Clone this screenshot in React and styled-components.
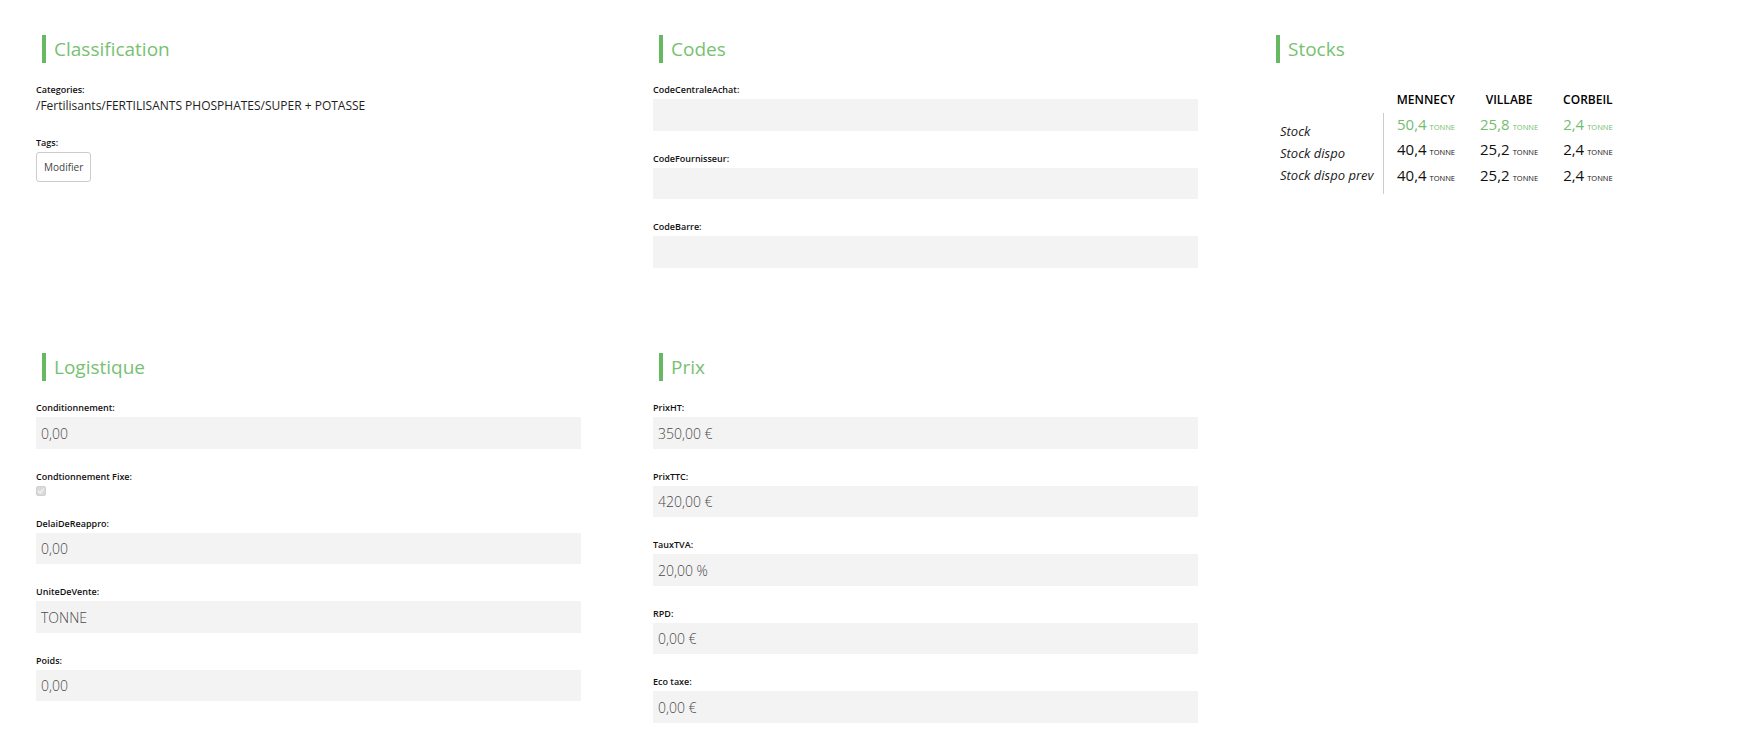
import React from "react";
import styled, { createGlobalStyle } from "styled-components";

const GlobalStyle = createGlobalStyle`
  html, body {
    margin: 0;
    padding: 0;
    background: #ffffff;
  }
  body {
    font-family: "Open Sans", "Liberation Sans", sans-serif;
    color: #222222;
  }
`;

const Page = styled.div`
  display: grid;
  grid-template-columns: repeat(3, 545px);
  column-gap: 72px;
  row-gap: 64.5px;
  align-items: start;
  padding: 35px 0 40px 36px;
`;

const Section = styled.section`
  min-width: 0;
`;

const SectionTitle = styled.h2`
  margin: 0 0 20px 6px;
  height: 28px;
  line-height: 28px;
  border-left: 4px solid #66b960;
  padding-left: 8px;
  font-size: 19px;
  font-weight: 400;
  color: #77c172;
`;

const Field = styled.div`
  margin-bottom: 21px;
`;

const Label = styled.div`
  font-size: 9px;
  font-weight: 600;
  line-height: 13px;
  color: #111111;
  margin-bottom: ${(p) => (p.$gap != null ? p.$gap : 3)}px;
`;

const TextValue = styled.div`
  font-size: 12px;
  line-height: 18px;
  color: #1e1e1e;
`;

const ReadonlyInput = styled.div`
  box-sizing: border-box;
  height: 31.5px;
  padding: 1px 5px 0;
  display: flex;
  align-items: center;
  background: #f3f3f3;
  font-size: 14px;
  font-weight: 300;
  color: #4a4a4a;
`;

const Button = styled.button`
  height: 30px;
  padding: 0 7px;
  border: 1px solid #cccccc;
  border-radius: 3px;
  background: #ffffff;
  font-family: "Open Sans", "Liberation Sans", sans-serif;
  font-size: 10px;
  color: #444444;
  cursor: pointer;
`;

const CheckBox = styled.span`
  box-sizing: border-box;
  display: flex;
  align-items: center;
  justify-content: center;
  width: 10px;
  height: 10px;
  border: 1px solid #d0d0d0;
  border-radius: 2px;
  background: #dadada;
`;

/* the stock grid sits a bit lower than the form fields of its neighbours */
const StockTable = styled.table`
  margin: 28px 0 0 10px;
  border-collapse: collapse;
`;

const SiteHead = styled.th`
  padding: 0 12.5px 4.6px;
  font-size: 12px;
  font-weight: 600;
  line-height: 17px;
  text-align: center;
  color: #000000;
`;

const RowLabels = styled.td`
  vertical-align: middle;
  padding: 0 10px 0 0;
  border-right: 1px solid #cccccc;
  font-size: 13px;
  font-style: italic;
  line-height: 22px;
  white-space: nowrap;
  color: #1a1a1a;
`;

const SiteCell = styled.td`
  vertical-align: top;
  padding: 0 12.5px 5px;
  text-align: center;
  white-space: nowrap;
`;

const Quantity = styled.div`
  font-size: 15px;
  line-height: 22px;
  margin-bottom: 3.5px;
  color: ${(p) => (p.$highlight ? "#74bd6f" : "#111111")};
`;

const Unit = styled.span`
  margin-left: 3px;
  font-size: 7.5px;
  line-height: 1;
  text-transform: uppercase;
`;

const codes = ["CodeCentraleAchat", "CodeFournisseur", "CodeBarre"];

const prices = [
  ["PrixHT", "350,00 €"],
  ["PrixTTC", "420,00 €"],
  ["TauxTVA", "20,00 %"],
  ["RPD", "0,00 €"],
  ["Eco taxe", "0,00 €"],
];

const sites = [
  { name: "MENNECY", values: ["50,4", "40,4", "40,4"] },
  { name: "VILLABE", values: ["25,8", "25,2", "25,2"] },
  { name: "CORBEIL", values: ["2,4", "2,4", "2,4"] },
];

const stockRows = ["Stock", "Stock dispo", "Stock dispo prev"];

function InputField({ label, value }) {
  return (
    <Field>
      <Label>{label}:</Label>
      <ReadonlyInput>{value}</ReadonlyInput>
    </Field>
  );
}

function CheckIcon() {
  return (
    <svg width="8" height="8" viewBox="0 0 9 9" aria-hidden="true">
      <path
        d="M1.6 4.7 L3.6 6.7 L7.4 2.1"
        fill="none"
        stroke="#f4f4f4"
        strokeWidth="1.5"
        strokeLinecap="round"
        strokeLinejoin="round"
      />
    </svg>
  );
}

export default function App() {
  return (
    <>
      <GlobalStyle />
      <Page>
        <Section>
          <SectionTitle>Classification</SectionTitle>
          <Field>
            <Label $gap={1}>Categories:</Label>
            <TextValue>/Fertilisants/FERTILISANTS PHOSPHATES/SUPER + POTASSE</TextValue>
          </Field>
          <Field>
            <Label>Tags:</Label>
            <Button type="button">Modifier</Button>
          </Field>
        </Section>

        <Section>
          <SectionTitle>Codes</SectionTitle>
          {codes.map((c) => (
            <InputField key={c} label={c} value="" />
          ))}
        </Section>

        <Section>
          <SectionTitle>Stocks</SectionTitle>
          <StockTable>
            <thead>
              <tr>
                <th />
                {sites.map((s) => (
                  <SiteHead key={s.name}>{s.name}</SiteHead>
                ))}
              </tr>
            </thead>
            <tbody>
              <tr>
                <RowLabels>
                  {stockRows.map((r) => (
                    <div key={r}>{r}</div>
                  ))}
                </RowLabels>
                {sites.map((s) => (
                  <SiteCell key={s.name}>
                    {s.values.map((v, i) => (
                      <Quantity key={i} $highlight={i === 0}>
                        {v}
                        <Unit>Tonne</Unit>
                      </Quantity>
                    ))}
                  </SiteCell>
                ))}
              </tr>
            </tbody>
          </StockTable>
        </Section>

        <Section>
          <SectionTitle>Logistique</SectionTitle>
          <InputField label="Conditionnement" value="0,00" />
          <Field>
            <Label>Condtionnement Fixe:</Label>
            <CheckBox>
              <CheckIcon />
            </CheckBox>
          </Field>
          <InputField label="DelaiDeReappro" value="0,00" />
          <InputField label="UniteDeVente" value="TONNE" />
          <InputField label="Poids" value="0,00" />
        </Section>

        <Section>
          <SectionTitle>Prix</SectionTitle>
          {prices.map(([l, v]) => (
            <InputField key={l} label={l} value={v} />
          ))}
        </Section>
      </Page>
    </>
  );
}
